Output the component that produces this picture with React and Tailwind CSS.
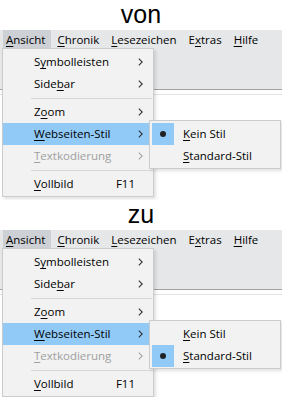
import React from 'react';

const ui = { fontFamily: '"Open Sans", "Liberation Sans", sans-serif' };

function Chevron({ disabled }) {
  return (
    <svg width="5" height="8" viewBox="0 0 5 8" className={disabled ? 'text-[#a6a6a6]' : 'text-[#333]'}>
      <path d="M0.8 0.6 L4.2 4 L0.8 7.4" fill="none" stroke="currentColor" strokeWidth="1.1" />
    </svg>
  );
}

// label with accelerator letter underlined
function Acc({ pre = '', k, post = '' }) {
  return (
    <span>
      {pre}
      <u className="underline-offset-2">{k}</u>
      {post}
    </span>
  );
}

function Item({ children, arrow, shortcut, disabled, active }) {
  return (
    <div
      className={`flex items-center h-[22px] pl-[31px] mr-[3px] ${active ? 'bg-[#91c9f7]' : ''} ${
        disabled ? 'text-[#a0a0a0]' : 'text-black'
      }`}
    >
      <div className="flex-1">{children}</div>
      {arrow && (
        <div className="mr-[7px] flex items-center">
          <Chevron disabled={disabled} />
        </div>
      )}
      {shortcut && <div className="mr-[15px]">{shortcut}</div>}
    </div>
  );
}

function Sep() {
  return (
    <div className="h-[6px] flex items-center ml-[28px] mr-[1px]">
      <div className="h-px w-full bg-[#d7d7d7]" />
    </div>
  );
}

function Radio({ checked, children }) {
  return (
    <div className="flex items-center h-[22px]">
      <div className={`w-[22px] h-[22px] ml-[2px] flex items-center justify-center ${checked ? 'bg-[#91c9f7]' : ''}`}>
        {checked && <div className="w-[6px] h-[6px] rounded-full bg-[#222]" />}
      </div>
      <div className="ml-[9px]">{children}</div>
    </div>
  );
}

function Half({ title, standard }) {
  return (
    <div className="relative h-[200px] overflow-hidden bg-white">
      <div
        className="h-[30px] flex items-center justify-center text-[25px] text-black leading-none pb-[2px]"
        style={{ fontFamily: '"Liberation Sans", Arial, sans-serif' }}
      >
        {title}
      </div>

      <div className="h-[60px] bg-[#e6e7e9] border-b border-[#a0a0a0] text-[11.5px] text-black" style={ui}>
        <div className="flex h-[19px] items-center">
          <div className="ml-[3px] pl-[3px] pr-[6px] h-full flex items-center bg-[#cdd0d4]">
            <Acc k="A" post="nsicht" />
          </div>
          <div className="px-[6px]"><Acc k="C" post="hronik" /></div>
          <div className="px-[6px]"><Acc k="L" post="esezeichen" /></div>
          <div className="px-[6px]"><Acc pre="E" k="x" post="tras" /></div>
          <div className="px-[6px]"><Acc k="H" post="ilfe" /></div>
        </div>
      </div>
      <div className="mt-[4px] h-px bg-[#e2e2e2]" />

      <div
        className="absolute left-[2px] top-[48px] w-[152px] bg-[#f2f2f2] border border-[#cccccc] pt-[2px] pb-[1px] text-[11.5px] shadow-[2px_2px_3px_rgba(0,0,0,0.12)]"
        style={ui}
      >
        <Item arrow><Acc pre="S" k="y" post="mbolleisten" /></Item>
        <Item arrow><Acc pre="Side" k="b" post="ar" /></Item>
        <Sep />
        <Item arrow><Acc pre="Z" k="o" post="om" /></Item>
        <Item arrow active><Acc k="W" post="ebseiten-Stil" /></Item>
        <Item arrow disabled><Acc k="T" post="extkodierung" /></Item>
        <Sep />
        <Item shortcut="F11"><Acc k="V" post="ollbild" /></Item>
      </div>

      <div
        className="absolute left-[149px] top-[120px] w-[132px] bg-[#f2f2f2] border border-[#cccccc] pt-[2px] pb-[1px] text-[11.5px] text-black shadow-[2px_2px_3px_rgba(0,0,0,0.12)]"
        style={ui}
      >
        <Radio checked={!standard}><Acc k="K" post="ein Stil" /></Radio>
        <Radio checked={standard}><Acc k="S" post="tandard-Stil" /></Radio>
      </div>
    </div>
  );
}

export default function App() {
  return (
    <div className="w-[282px] h-[397px] overflow-hidden bg-white">
      <Half title="von" standard={false} />
      <Half title="zu" standard={true} />
    </div>
  );
}
